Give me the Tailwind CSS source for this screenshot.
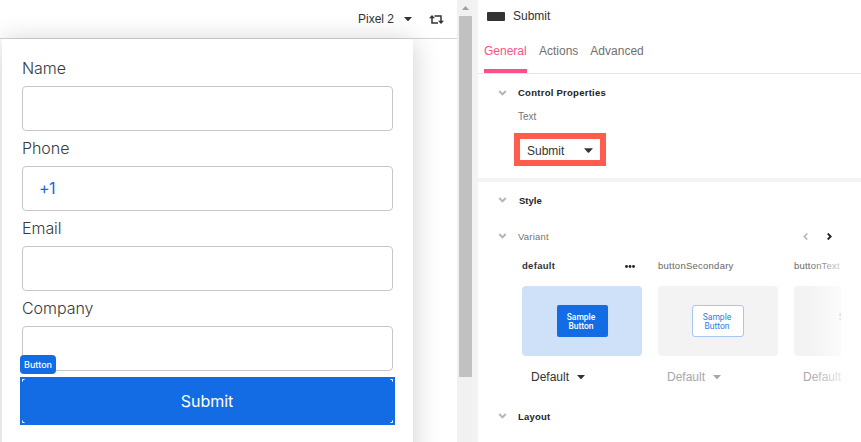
<!DOCTYPE html>
<html lang="en">
<head>
<meta charset="utf-8">
<title>Form designer</title>
<script src="https://cdn.jsdelivr.net/npm/@tailwindcss/browser@4"></script>
</head>
<body class="w-[861px] h-[442px] overflow-hidden bg-white font-['Liberation_Sans',Arial,sans-serif] text-[#333]">
<svg class="hidden"><defs>
<symbol id="chev" viewBox="0 0 8 6"><path d="M.8 1 4 4.3 7.2 1" fill="none" stroke="currentColor" stroke-width="1.9"/></symbol>
<symbol id="caret" viewBox="0 0 8 4"><path d="M0 0h8L4.6 3.7Q4 4.2 3.4 3.7Z" fill="currentColor"/></symbol>
</defs></svg>
<div class="flex h-full">
  <!-- Canvas -->
  <section class="w-[457px] h-full flex flex-col overflow-hidden">
    <header class="h-[39px] shrink-0 border-b border-[#d4d4d4] flex items-center justify-end pr-[13px] text-[12px]">
      <span class="w-[37px] whitespace-nowrap">Pixel 2</span>
      <svg class="w-[8px] h-[4px] ml-[9px]"><use href="#caret"/></svg>
      <svg class="w-[15px] h-[9px] ml-[17px]" viewBox="0 0 15 9" fill="none" stroke="#333" stroke-width="1.5"><path d="M3 2v6h6M5.500 1H12v6"/><path d="M0 3.300 3 0l3 3.300ZM9 5.700 12 9l3-3.300Z" fill="#333" stroke="none"/></svg>
    </header>
    <main class="grow pl-[2px]">
      <div class="w-[411px] h-[450px] bg-white px-[20px] pt-[12px] shadow-[0_3px_26px_rgba(0,0,0,0.2)] font-['Inter',sans-serif] text-[16px]">
        <div class="h-[35px] leading-[35px] tracking-[-0.05px] font-light text-[#3a3a3a]">Name</div>
        <div class="w-[371px] h-[45px] rounded-[4px] border border-[#c6c6c6]"></div>
        <div class="h-[35px] leading-[35px] tracking-[-0.05px] font-light text-[#3a3a3a]">Phone</div>
        <div class="w-[371px] h-[45px] rounded-[4px] border border-[#c6c6c6] pl-[16px] leading-[43px] tracking-[-0.5px] text-[#146ce4]">+1</div>
        <div class="h-[35px] leading-[35px] tracking-[-0.05px] font-light text-[#3a3a3a]">Email</div>
        <div class="w-[371px] h-[45px] rounded-[4px] border border-[#c6c6c6]"></div>
        <div class="h-[35px] leading-[35px] tracking-[-0.05px] font-light text-[#3a3a3a]">Company</div>
        <div class="w-[371px] h-[45px] rounded-[4px] border border-[#c6c6c6]"></div>
        <div class="relative w-[375px] h-[48px] -ml-[2px] mt-[6px] bg-[#146ce4] text-white flex items-center justify-center">
          <span class="pr-[1px]">Submit</span>
          <span class="absolute left-0 -top-[22px] w-[36px] h-[19px] rounded-[4px] bg-[#146ce4] font-['Inter',sans-serif] font-medium text-[9px] leading-[19px] text-center">Button</span>
          <svg class="absolute inset-0 w-full h-full" viewBox="0 0 375 48" fill="none" stroke="#fff" stroke-width="1"><path d="M2.500 4.500V2.500H4.500M370.500 2.500h2v2M2.500 43.500v2h2M370.500 45.500h2v-2"/></svg>
        </div>
      </div>
    </main>
  </section>
  <!-- Scrollbar -->
  <div class="w-[15px] bg-[#f1f1f1] pl-[2px]">
    <div class="h-[16px] flex items-center justify-center pr-[1px]"><svg class="w-[7px] h-[4px]" viewBox="0 0 7 4"><path d="M0 4 3.500 0 7 4Z" fill="#a0a0a0"/></svg></div>
    <div class="w-[13px] h-[361px] bg-[#c1c1c1]"></div>
  </div>
  <div class="w-[6px] bg-[#f3f3f3]"></div>
  <!-- Properties -->
  <aside class="w-[383px] h-full flex flex-col">
    <div class="h-[32px] shrink-0 flex items-center pl-[9px] text-[12px] text-[#333]">
      <span class="w-[18px] h-[9px] rounded-[1px] bg-[#333]"></span><span class="ml-[8px]">Submit</span>
    </div>
    <nav class="h-[42px] shrink-0 border-b border-[#e4e4e4] flex pl-[6px] text-[12px] leading-[38px] text-[#707070]">
      <span class="w-[43px] h-[41px] border-b-4 border-[#ff4f86] text-[#ff4f86]">General</span>
      <span class="ml-[12px]">Actions</span>
      <span class="ml-[12px]">Advanced</span>
    </nav>
    <section class="h-[104px] shrink-0">
      <div class="h-[37px] flex items-center pl-[20px]"><svg class="w-[9px] h-[6px] text-[#b4b4b4]"><use href="#chev"/></svg><span class="ml-[11px] pt-[2px] text-[9.500px] tracking-[0.260px] font-bold text-[#222]">Control Properties</span></div>
      <div class="h-[22px] pl-[40px] leading-[12px] text-[10px] text-[#757575]">Text</div>
      <div class="ml-[36px] w-[92px] h-[33px] border-[6px] border-[#ff5c4d] flex items-center pt-[1px] pl-[7px] pr-[7px] text-[12px]"><span class="grow pt-[1px]">Submit</span><svg class="w-[9px] h-[5px]"><use href="#caret"/></svg></div>
    </section>
    <div class="h-[4px] shrink-0 bg-[#f3f3f3]"></div>
    <section>
      <div class="h-[36px] flex items-center pl-[20px]"><svg class="w-[9px] h-[6px] text-[#b4b4b4]"><use href="#chev"/></svg><span class="ml-[12px] pt-[2px] text-[9.500px] font-bold text-[#222]">Style</span></div>
      <div class="h-[36px] flex items-center pl-[20px] pr-[29px]"><svg class="w-[9px] h-[6px] text-[#b4b4b4]"><use href="#chev"/></svg><span class="ml-[11px] pt-[2px] text-[9.500px] tracking-[0.200px] text-[#757575]">Variant</span>
        <svg class="w-[5px] h-[7px] ml-auto" viewBox="0 0 5 7" fill="none" stroke="#b4b4b4" stroke-width="1.6"><path d="M4.300.5 1.300 3.500l3 3"/></svg>
        <svg class="w-[5px] h-[7px] ml-[19px]" viewBox="0 0 5 7" fill="none" stroke="#222" stroke-width="1.800"><path d="M.7.5l3 3-3 3"/></svg>
      </div>
      <div class="relative ml-[44px] w-[319px] h-[142px] overflow-hidden">
        <div class="flex gap-[16px] w-[392px] text-[9.500px] text-[#666]">
          <div class="w-[120px]">
            <div class="h-[32px] pb-[8px] flex items-center justify-between pr-[7px] font-bold text-[#333]"><span class="pt-[1px] tracking-[0.300px]">default</span><svg class="w-[10px] h-[3px]" viewBox="0 0 10 3" fill="#222"><circle cx="1.500" cy="1.500" r="1.400"/><circle cx="5" cy="1.500" r="1.400"/><circle cx="8.500" cy="1.500" r="1.400"/></svg></div>
            <div class="h-[70px] rounded-[4px] bg-[#cfe1f9] flex items-center justify-center"><div class="w-[51px] h-[32px] rounded-[2px] bg-[#146ce4] pt-[8px] pr-[2px] text-center font-['Roboto',sans-serif] font-medium text-[8.500px] leading-[9px] text-white">Sample<br>Button</div></div>
            <div class="h-[42px] flex items-center pl-[9px] text-[12px] text-[#333]">Default<svg class="w-[8px] h-[4px] ml-[8px]"><use href="#caret"/></svg></div>
          </div>
          <div class="w-[120px]">
            <div class="h-[32px] pb-[8px] flex items-center"><span class="pt-[1px] tracking-[0.250px]">buttonSecondary</span></div>
            <div class="h-[70px] rounded-[4px] bg-[#f3f3f3] flex items-center justify-center"><div class="w-[52px] h-[32px] rounded-[3px] border border-[#a4c8f5] bg-white pt-[7px] pr-[2px] text-center font-['Roboto',sans-serif] text-[8.500px] leading-[9px] text-[#2b7de9]">Sample<br>Button</div></div>
            <div class="h-[42px] flex items-center pl-[9px] text-[12px] text-[#a7a7a7]">Default<svg class="w-[8px] h-[4px] ml-[8px]"><use href="#caret"/></svg></div>
          </div>
          <div class="w-[120px]">
            <div class="h-[32px] pb-[8px] flex items-center"><span class="pt-[1px] tracking-[0.200px]">buttonText</span></div>
            <div class="h-[70px] rounded-[4px] bg-[#f3f3f3] flex items-center justify-center"><div class="w-[52px] h-[32px] pt-[8px] pr-[2px] text-center font-['Roboto',sans-serif] text-[8.500px] leading-[9px] text-[#2b7de9]">Sample</div></div>
            <div class="h-[42px] flex items-center pl-[9px] text-[12px] text-[#a7a7a7]">Default</div>
          </div>
        </div>
        <div class="absolute right-0 top-0 w-[32px] h-full bg-linear-to-r from-white/0 to-white/70"></div>
      </div>
      <div class="h-[40px] flex items-center pl-[20px]"><svg class="w-[9px] h-[6px] text-[#b4b4b4]"><use href="#chev"/></svg><span class="ml-[11px] pt-[2px] text-[9.500px] tracking-[0.200px] font-bold text-[#222]">Layout</span></div>
    </section>
  </aside>
</div>
</body>
</html>
